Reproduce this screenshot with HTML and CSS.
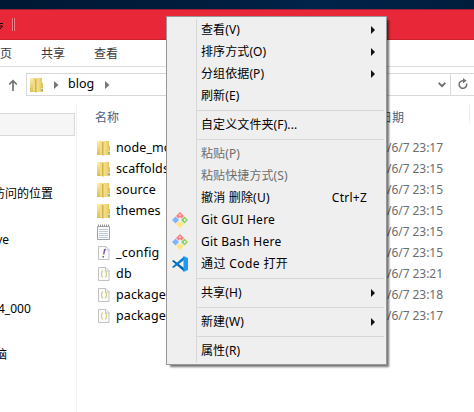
FILE: index.html
```html
<!DOCTYPE html>
<html lang="zh-CN">
<head>
<meta charset="utf-8">
<title>blog</title>
<link rel="stylesheet" href="styles.css">
</head>
<body>
<svg class="defs" aria-hidden="true">
  <defs>
    <linearGradient id="gold"><stop offset="0" stop-color="#f7e794"/><stop offset=".6" stop-color="#ecd67c"/><stop offset="1" stop-color="#dcbd52"/></linearGradient>
    <linearGradient id="fold" x2="0" y2="1"><stop offset="0" stop-color="#fbefaf"/><stop offset="1" stop-color="#dfbd50"/></linearGradient>
    <symbol id="folder" viewBox="0 0 13 16">
      <path fill="url(#fold)" d="M0 1h6v14H0z"/><path fill="url(#gold)" d="M5 1h7v5h1v9H5z"/>
      <path fill="#d2b04a" d="M5 2h1.500v14L5 15z"/><path fill="#f1dc83" d="M3 1h2v14l-2-1z"/>
      <path fill="#3da5d9" d="M11.500 12h1v2h-1z"/><path fill="#fff" d="M11.500 11h1v1h-1z"/>
    </symbol>
    <symbol id="page" viewBox="0 0 12 14">
      <path fill="#fafafa" stroke="#c2c2c2" d="M.5.5h7.500l3 3v10H.5z"/><path fill="none" stroke="#c8c8c8" d="M7.500.5v3.500h4"/>
    </symbol>
    <symbol id="git" viewBox="0 0 16 16">
      <path fill="#ff8080" d="M8 0l4 4-2.500 2.500L8 5 6.500 6.500 4 4z"/>
      <path fill="#80b3ff" d="M3.500 4.500L7 8l-3.500 3.500L0 8z"/>
      <path fill="#8dd35f" d="M12.500 4.500L16 8l-3.500 3.500L9 8z"/>
      <path fill="#ffe680" d="M6.500 9.500L8 11l1.500-1.500L12 12l-4 4-4-4z"/>
      <path fill="#efefef" d="M7.300 2h1.200v2H7.300zM12 7h1.500v2H12z"/>
    </symbol>
    <symbol id="code" viewBox="0 0 16 16">
      <path fill="#0065a9" d="M0 5l1.500-1L12 12v3.500z"/><path fill="#007acc" d="M0 11l1.500 1L12 4V.5z"/>
      <path fill="#1f9cf0" d="M11.500 0L16 2v12l-4.500 2z"/>
    </symbol>
  </defs>
</svg>
<div class="desktop"></div>
<header class="titlebar"><svg width="6" height="8"><path d="M0 1.500h3M0 4h2.500L0 7" stroke="#16090b" fill="none"/></svg><i class="grip"></i></header>
<nav class="tabs"><span>主页</span><span>共享</span><span>查看</span></nav>
<div class="toolbar">
  <svg class="up" width="10" height="12"><path d="M5 12V2M1.200 5.500L5 1.700l3.800 3.800" fill="none" stroke="#737373" stroke-width="1.700"/></svg>
  <div class="address">
    <svg width="13" height="16"><use href="#folder"/></svg>
    <svg class="crumb" width="5" height="8"><path d="M0 0l4.500 4L0 8z" fill="#767676"/></svg>
    <span class="path">blog</span>
    <svg class="crumb" width="5" height="8"><path d="M0 0l4.500 4L0 8z" fill="#767676"/></svg>
    <svg class="drop" width="8" height="6"><path d="M.7.800L4 4.200 7.300.8" fill="none" stroke="#6b6b6b" stroke-width="1.800"/></svg>
    <div class="refresh"><svg width="10" height="12"><path d="M6 2.700H4.800A3.800 3.800 0 1 0 8.600 5.500" fill="none" stroke="#707070" stroke-width="1.500"/><path d="M5 0l3.500 2.800L5 5.200z" fill="#707070"/></svg></div>
  </div>
</div>
<main class="content">
  <aside class="sidebar">
    <div class="selected"></div>
    <span class="s1">访问的位置</span><span class="s2">OneDrive</span><span class="s3">4_000</span><span class="s4">电脑</span>
  </aside>
  <section class="files">
    <div class="head"><span>名称</span><span class="date">日期</span><i></i></div>
    <div class="row"><svg width="13" height="16"><use href="#folder"/></svg><span>node_modules</span><time>/6/7 23:17</time></div>
    <div class="row"><svg width="13" height="16"><use href="#folder"/></svg><span>scaffolds</span><time>/6/7 23:15</time></div>
    <div class="row"><svg width="13" height="16"><use href="#folder"/></svg><span>source</span><time>/6/7 23:15</time></div>
    <div class="row"><svg width="13" height="16"><use href="#folder"/></svg><span>themes</span><time>/6/7 23:15</time></div>
    <div class="row"><svg width="13" height="16"><path d="M.5 2.500h12v13H.5z" fill="#f7f9fb" stroke="#9ea3a7"/><path d="M2 5.500h9M2 7.500h9M2 9.500h9M2 11.500h9M2 13.500h9" stroke="#c3cad0"/><path d="M1 1.500h11" stroke="#929292" stroke-width="2" stroke-dasharray="1 1"/></svg><span></span><time>/6/7 23:15</time></div>
    <div class="row"><svg class="doc" width="12" height="14"><use href="#page"/><path d="M6 3h1.700L6.300 8.500H5zM4.500 10H6v1.500H4.500z" fill="#8750a5"/></svg><span class="wide">_config</span><time>/6/7 23:15</time></div>
    <div class="row"><svg class="doc" width="12" height="14"><use href="#page"/><path d="M5 4H4L3.500 7 4 10h1M7 4h1l.5 3L8 10H7" fill="none" stroke="#cdc96c"/></svg><span class="wide">db</span><time>/6/7 23:21</time></div>
    <div class="row"><svg class="doc" width="12" height="14"><use href="#page"/><path d="M5 4H4L3.500 7 4 10h1M7 4h1l.5 3L8 10H7" fill="none" stroke="#cdc96c"/></svg><span>package</span><time>/6/7 23:18</time></div>
    <div class="row"><svg class="doc" width="12" height="14"><use href="#page"/><path d="M5 4H4L3.500 7 4 10h1M7 4h1l.5 3L8 10H7" fill="none" stroke="#cdc96c"/></svg><span>package</span><time>/6/7 23:17</time></div>
  </section>
</main>
<div class="menu">
  <div class="item more">查看(V)</div>
  <div class="item more">排序方式(O)</div>
  <div class="item more">分组依据(P)</div>
  <div class="item">刷新(E)</div>
  <hr>
  <div class="item">自定义文件夹(F)...</div>
  <hr>
  <div class="item off">粘贴(P)</div>
  <div class="item off">粘贴快捷方式(S)</div>
  <div class="item undo">撤消 删除(U)<kbd>Ctrl+Z</kbd></div>
  <div class="item latin"><svg width="16" height="16"><use href="#git"/></svg>Git GUI Here</div>
  <div class="item latin"><svg width="16" height="16"><use href="#git"/></svg>Git Bash Here</div>
  <div class="item latin code"><svg width="16" height="16"><use href="#code"/></svg>通过 Code 打开</div>
  <hr>
  <div class="item more">共享(H)</div>
  <hr>
  <div class="item more">新建(W)</div>
  <hr>
  <div class="item">属性(R)</div>
</div>
</body>
</html>
```
FILE: styles.css
```css
* { box-sizing: border-box; }
body {
  margin: 0; width: 474px; height: 412px; overflow: hidden; position: relative;
  background: #fff; color: #000;
  font: 12px/20px "Noto Sans", "Noto Sans CJK SC", sans-serif;
  white-space: nowrap;
}
svg { display: block; flex: none; }
.defs { position: absolute; width: 0; height: 0; }
.desktop { height: 9px; background: linear-gradient(90deg, #001833, #001e40 50%, #00244b 65%, #001d3c); }
.titlebar {
  height: 31px; background: #e82838; border-top: 1px solid #9d1e36; border-bottom: 1px solid #c9202e;
  display: flex; align-items: flex-start; padding-top: 12px;
}
.grip { width: 3px; height: 13px; margin: -4px 0 0 6px; border: solid #f27d87; border-width: 0 1px; background: #a82634; }
.tabs { height: 27px; border-bottom: 1px solid #dcdcdc; display: flex; gap: 29px; padding: 4px 0 0; margin-left: -12px; color: #3b3b3b; }
.tabs span { width: 24px; }
.toolbar { height: 37px; padding: 6px 0 0 8px; display: flex; }
.up { margin: 6px 8px 0 0; }
.address { flex: 1; height: 23px; border: 1px solid #d9d9d9; border-right: 0; display: flex; align-items: center; padding-left: 3px; }
.crumb { margin-left: 11px; }
.path { font-size: 12.500px; margin: -1px 1px 0 9px; width: 25px; }
.drop { margin-left: auto; }
.refresh { height: 21px; border-left: 1px solid #d9d9d9; margin-left: 4px; padding: 4px 6px 0 7px; width: 24px; }
.content { display: grid; grid-template-columns: 77px 1fr; height: 308px; }
.sidebar { border-right: 1px solid #f2f2f2; overflow: hidden; display: flex; flex-direction: column; align-items: flex-start; }
.selected { width: 75px; height: 23px; margin-top: 9px; border: 1px solid #d9d9d9; border-left: 0; background: #f6f6f6; }
.s1 { margin: 48px 0 0 -7px; }
.s2 { margin-top: 26px; width: 9px; direction: rtl; }
.s3 { margin: 49px 0 0 -2px; width: 31px; }
.s4 { margin: 26px 0 0 -17px; }
.head { height: 33px; padding: 4px 0 0 18px; color: #4c607a; display: flex; }
.date { margin-left: 261px; width: 24px; }
.head i { width: 1px; height: 23px; margin: -4px 0 0 65px; background: linear-gradient(#edf3fa, #dce6f2, #fff); }
.row { height: 21px; display: grid; grid-template-columns: 19px 271px 60px; padding-left: 20px; align-items: center; }
.row span { font-size: 12.500px; letter-spacing: .1px; }
.row .wide { font-size: 12.500px; letter-spacing: .2px; }
.row time { color: #6d6d6d; letter-spacing: -.05px; }
.doc { margin-left: 1px; }
.menu {
  position: absolute; left: 166px; top: 16px; width: 221px; height: 349px; padding: 2px;
  border: 1px solid #979797; background: linear-gradient(#d7d7d7, #d7d7d7) 29px 2px / 1px 343px no-repeat #efefef;
  box-shadow: 3px 3px 2px -1px rgba(0, 0, 0, .55);
}
.item { position: relative; height: 22px; padding: 1px 17px 0 32px; display: flex; letter-spacing: .1px; }
.latin { letter-spacing: .25px; }
.code { letter-spacing: .4px; }
.undo { letter-spacing: .2px; }
.item svg { margin: 2px 13px 0 -29px; }
.item kbd { margin-left: auto; font: inherit; letter-spacing: .25px; }
.off { color: #6d6d6d; }
.more::after { content: ""; margin: 6px -8px 0 auto; width: 0; height: 0; border: solid transparent; border-width: 4px 0 4px 4px; border-left-color: #111; }
hr { height: 1px; margin: 3px 0 3px 28px; border: 0; background: #d7d7d7; }
```
